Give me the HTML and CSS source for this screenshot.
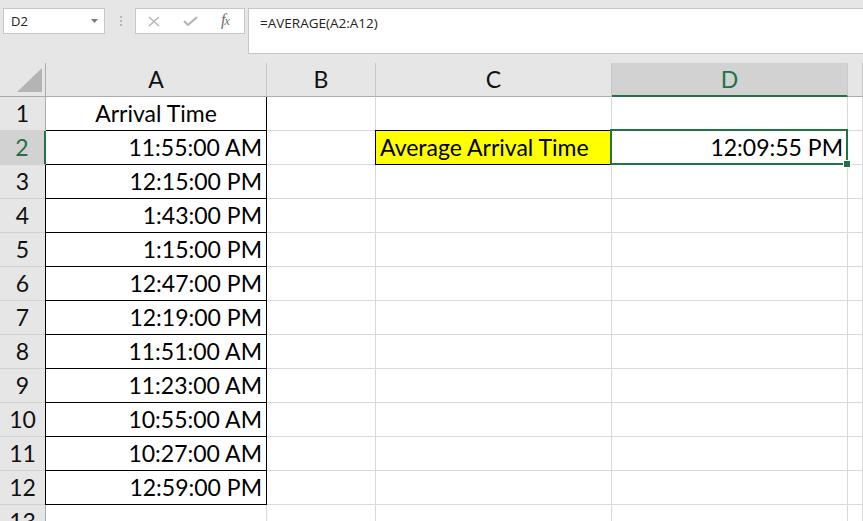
FILE: index.html
```html
<!DOCTYPE html>
<html>
<head>
<meta charset="utf-8">
<link rel="stylesheet" href="styles.css">
</head>
<body>
<div class="toolbar">
  <div class="namebox">
    <span class="name">D2</span>
    <svg class="dd" width="7" height="4" viewBox="0 0 7 4"><path d="M0 0H7L3.5 4Z" fill="#7a7a7a"/></svg>
  </div>
  <div class="dots"><i></i><i></i><i></i></div>
  <div class="fxbox">
    <svg class="ico" width="12" height="11" viewBox="0 0 12 11"><path d="M1 1L11 10M11 1L1 10" stroke="#b3b3b3" stroke-width="1.3" fill="none"/></svg>
    <svg class="ico" width="15" height="10" viewBox="0 0 15 10"><path d="M1 5L5 9L14 1" stroke="#b3b3b3" stroke-width="2" fill="none"/></svg>
    <span class="fx">f<small>x</small></span>
  </div>
  <div class="formula">=AVERAGE(A2:A12)</div>
</div>
<div class="sheet">
  <div class="corner"><svg width="46" height="34" viewBox="0 0 46 34"><path d="M17 29L42 5V29Z" fill="#b4b4b4"/></svg></div>
  <div class="ch">A</div><div class="ch">B</div><div class="ch">C</div><div class="ch sel-h">D</div><div class="ch"></div>

  <div class="rh">1</div><div class="c a first ctr">Arrival Time</div><div class="c"></div><div class="c"></div><div class="c"></div><div class="c"></div>
  <div class="rh sel-r">2</div><div class="c a num">11:55:00 AM</div><div class="c"></div><div class="c yellow">Average Arrival Time</div><div class="c num active">12:09:55 PM<span class="sel"><span class="handle"></span></span></div><div class="c"></div>
  <div class="rh">3</div><div class="c a num edge">12:15:00 PM</div><div class="c"></div><div class="c"></div><div class="c"></div><div class="c"></div>
  <div class="rh">4</div><div class="c a num edge">1:43:00 PM</div><div class="c"></div><div class="c"></div><div class="c"></div><div class="c"></div>
  <div class="rh">5</div><div class="c a num edge">1:15:00 PM</div><div class="c"></div><div class="c"></div><div class="c"></div><div class="c"></div>
  <div class="rh">6</div><div class="c a num edge">12:47:00 PM</div><div class="c"></div><div class="c"></div><div class="c"></div><div class="c"></div>
  <div class="rh">7</div><div class="c a num edge">12:19:00 PM</div><div class="c"></div><div class="c"></div><div class="c"></div><div class="c"></div>
  <div class="rh">8</div><div class="c a num edge">11:51:00 AM</div><div class="c"></div><div class="c"></div><div class="c"></div><div class="c"></div>
  <div class="rh">9</div><div class="c a num edge">11:23:00 AM</div><div class="c"></div><div class="c"></div><div class="c"></div><div class="c"></div>
  <div class="rh">10</div><div class="c a num edge">10:55:00 AM</div><div class="c"></div><div class="c"></div><div class="c"></div><div class="c"></div>
  <div class="rh">11</div><div class="c a num edge">10:27:00 AM</div><div class="c"></div><div class="c"></div><div class="c"></div><div class="c"></div>
  <div class="rh">12</div><div class="c a num edge">12:59:00 PM</div><div class="c"></div><div class="c"></div><div class="c"></div><div class="c"></div>
  <div class="rh">13</div><div class="c"></div><div class="c"></div><div class="c"></div><div class="c"></div><div class="c"></div>
</div>
</body>
</html>
```

FILE: styles.css
```css
html, body {
  margin: 0;
  padding: 0;
  width: 863px;
  height: 521px;
  overflow: hidden;
  background: #e6e6e6;
}

.toolbar {
  height: 63px;
  box-sizing: border-box;
  padding: 8px 0 0 3px;
  display: flex;
  align-items: flex-start;
  background: #e6e6e6;
  font-family: "Open Sans", "Noto Sans", sans-serif;
  color: #222;
}

.namebox {
  width: 102px;
  height: 26px;
  box-sizing: border-box;
  background: #fff;
  border: 1px solid #c6c6c6;
  display: flex;
  align-items: center;
  justify-content: space-between;
  padding: 0 6px 0 7px;
}

.name {
  font-size: 13px;
  line-height: 24px;
}

.dd {
  display: block;
  margin-top: -1px;
}

.dots {
  width: 30px;
  height: 26px;
  display: flex;
  flex-direction: column;
  align-items: center;
  justify-content: center;
  gap: 2px;
  padding-left: 1px;
  box-sizing: border-box;
}

.dots i {
  display: block;
  width: 2px;
  height: 2px;
  background: #b5b5b5;
}

.fxbox {
  width: 110px;
  height: 26px;
  box-sizing: border-box;
  background: #fff;
  border: 1px solid #c6c6c6;
  margin-right: 3px;
  display: flex;
  align-items: center;
  padding: 0 0 0 12px;
}

.ico {
  display: block;
}

.ico + .ico {
  margin-left: 23px;
}

.fx {
  margin-left: 23px;
  font-family: "Liberation Serif", serif;
  font-style: italic;
  font-size: 16px;
  color: #6b6b6b;
  line-height: 20px;
  margin-top: -2px;
}

.fx small {
  font-size: 12px;
  margin-left: -1px;
}

.formula {
  flex: 1;
  height: 46px;
  box-sizing: border-box;
  background: #fff;
  border: 1px solid #c6c6c6;
  border-right: none;
  padding: 5px 0 0 11px;
  font-size: 13.5px;
  line-height: 18px;
  white-space: nowrap;
}

.sheet {
  display: grid;
  grid-template-columns: 46px 221px 109px 236px 236px 1fr;
  grid-auto-rows: 34px;
  font-family: "Lato", "Open Sans", sans-serif;
  font-size: 23px;
  line-height: 33px;
  color: #000;
}

.sheet > div {
  box-sizing: border-box;
  white-space: nowrap;
}

.corner {
  background: #e6e6e6;
  border-right: 1px solid #ababab;
  border-bottom: 1px solid #ababab;
}

.corner svg {
  display: block;
}

.ch {
  background: #e6e6e6;
  border-right: 1px solid #c8c8c8;
  border-bottom: 1px solid #ababab;
  text-align: center;
  color: #111;
}

.ch.sel-h {
  background: #d2d2d2;
  color: #217346;
  border-bottom: 2px solid #217346;
  line-height: 32px;
}

.rh {
  background: #e6e6e6;
  border-right: 1px solid #ababab;
  border-bottom: 1px solid #d0d0d0;
  text-align: center;
  color: #111;
}

.rh.sel-r {
  background: #d2d2d2;
  color: #217346;
  border-right: 2px solid #217346;
}

.c {
  background: #fff;
  border-right: 1px solid #d9d9d9;
  border-bottom: 1px solid #d9d9d9;
}

.c.a {
  border-right-color: #000;
  border-bottom-color: #000;
}

.c.edge {
  box-shadow: -1px 0 0 #000;
}

.ctr {
  text-align: center;
}

.num {
  text-align: right;
  padding-right: 4px;
}

.yellow {
  background: #ffff00;
  border-right-color: #000;
  border-bottom-color: #000;
  box-shadow: 0 0 0 1px #000;
  padding-left: 4px;
}

.active {
  position: relative;
}

.sel {
  position: absolute;
  top: -2px;
  left: -2px;
  right: -1px;
  bottom: -1px;
  border: 2px solid #217346;
}

.handle {
  position: absolute;
  right: -4px;
  bottom: -4px;
  width: 6px;
  height: 6px;
  background: #217346;
  box-shadow: 0 0 0 1px #fff;
}
```
